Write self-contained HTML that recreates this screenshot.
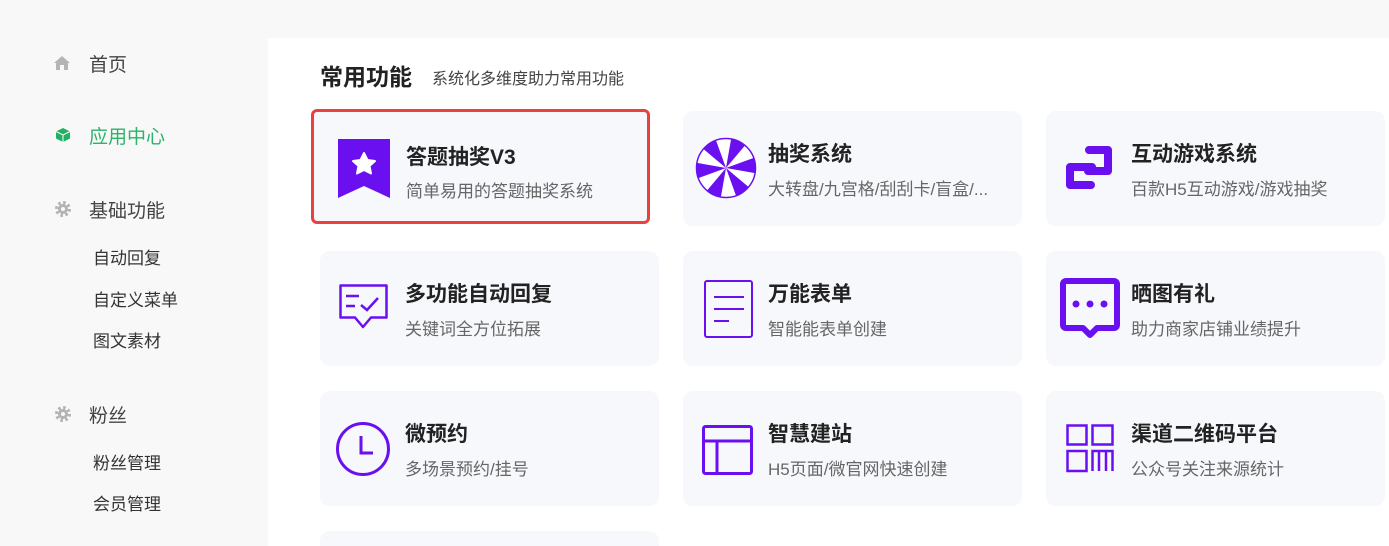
<!DOCTYPE html>
<html><head><meta charset="utf-8">
<style>
*{margin:0;padding:0;box-sizing:border-box}
html,body{width:1389px;height:546px;overflow:hidden;background:#f8f8f8}
body{font-family:"Liberation Sans","Noto Sans CJK SC",sans-serif;position:relative}
.main{position:absolute;left:268px;top:38px;width:1121px;height:508px;background:#fff}
.a{position:absolute;white-space:nowrap}
.nav{font-size:19px;color:#444}
.sub{font-size:17px;color:#333}
.card{position:absolute;width:339px;height:115px;background:#f7f8fc;border-radius:10px;overflow:hidden}
.t{position:absolute;left:85px;top:27px;font-size:21px;font-weight:bold;color:#222}
.d{position:absolute;left:85px;top:64px;font-size:17px;color:#666}
.ic{position:absolute;left:14px;top:26px}
</style></head><body>
<div class="main"></div>
<svg class="a" style="left:53px;top:55px" width="18" height="16" viewBox="0 0 18 16"><path d="M9 1 L1 8 H3 V15 H7 V10 H11 V15 H15 V8 H17 Z" fill="#b4b4b4"/></svg>
<div class="a nav" style="left:89px;top:50px">首页</div>
<svg class="a" style="left:55px;top:127px" width="16" height="16" viewBox="0 0 16 16"><path d="M8 1 L15 4.5 V11.5 L8 15 L1 11.5 V4.5 Z" fill="#22b062"/><path d="M1 4.5 L8 8 L15 4.5 M8 8 V15" stroke="#fff" stroke-width="1" fill="none"/></svg>
<div class="a nav" style="left:89px;top:122px;color:#2ab46a">应用中心</div>
<svg class="a" style="left:54px;top:200px" width="18" height="18" viewBox="0 0 18 18"><circle cx="9" cy="9" r="6" fill="none" stroke="#b4b4b4" stroke-width="4" stroke-dasharray="2.4 2.3"/><circle cx="9" cy="9" r="5" fill="#b4b4b4"/><circle cx="9" cy="9" r="2" fill="#f8f8f8"/></svg>
<div class="a nav" style="left:89px;top:196px">基础功能</div>
<div class="a sub" style="left:93px;top:244px">自动回复</div>
<div class="a sub" style="left:93px;top:286px">自定义菜单</div>
<div class="a sub" style="left:93px;top:327px">图文素材</div>
<svg class="a" style="left:54px;top:405px" width="18" height="18" viewBox="0 0 18 18"><circle cx="9" cy="9" r="6" fill="none" stroke="#b4b4b4" stroke-width="4" stroke-dasharray="2.4 2.3"/><circle cx="9" cy="9" r="5" fill="#b4b4b4"/><circle cx="9" cy="9" r="2" fill="#f8f8f8"/></svg>
<div class="a nav" style="left:89px;top:401px">粉丝</div>
<div class="a sub" style="left:93px;top:449px">粉丝管理</div>
<div class="a sub" style="left:93px;top:490px">会员管理</div>

<div class="a" style="left:320px;top:58px;font-size:23px;font-weight:bold;color:#222">常用功能</div>
<div class="a" style="left:432px;top:65px;font-size:16px;color:#444">系统化多维度助力常用功能</div>

<!-- row1 -->
<div class="card" style="left:311px;top:109px;height:115px;border:3px solid #e8413f;border-radius:6px">
<svg class="ic" style="left:24px;top:27px" width="52" height="60" viewBox="0 0 52 60"><path d="M0 0 H52 V59 L26 47 L0 59 Z" fill="#6a0ff0"/><path d="M26 14 L29.5 21 L37 22 L31.5 27 L33 34.5 L26 31 L19 34.5 L20.5 27 L15 22 L22.5 21 Z" fill="#fff" stroke="#fff" stroke-width="2" stroke-linejoin="round"/></svg>
<div class="t" style="left:92px;top:29px">答题抽奖V3</div><div class="d" style="left:92px;top:65px">简单易用的答题抽奖系统</div></div>
<div class="card" style="left:683px;top:111px">
<svg class="ic" style="left:12px;top:26px" width="62" height="62" viewBox="-31 -31 62 62"><circle r="29.5" fill="#fff" stroke="#6a0ff0" stroke-width="1.5"/>
<g fill="#6a0ff0"><path d="M0 0 L0 -29.5 A29.5 29.5 0 0 1 14.75 -25.5Z" transform="rotate(10)"/><path d="M0 0 L0 -29.5 A29.5 29.5 0 0 1 14.75 -25.5Z" transform="rotate(70)"/><path d="M0 0 L0 -29.5 A29.5 29.5 0 0 1 14.75 -25.5Z" transform="rotate(130)"/><path d="M0 0 L0 -29.5 A29.5 29.5 0 0 1 14.75 -25.5Z" transform="rotate(190)"/><path d="M0 0 L0 -29.5 A29.5 29.5 0 0 1 14.75 -25.5Z" transform="rotate(250)"/><path d="M0 0 L0 -29.5 A29.5 29.5 0 0 1 14.75 -25.5Z" transform="rotate(310)"/></g></svg>
<div class="t">抽奖系统</div><div class="d">大转盘/九宫格/刮刮卡/盲盒/...</div></div>
<div class="card" style="left:1046px;top:111px">
<svg class="ic" style="left:0;top:0" width="80" height="115" viewBox="1046 111 80 115"><path d="M1089 150 H1108 V171 H1088 V167 M1092 167 H1070 V185 H1091" fill="none" stroke="#6a0ff0" stroke-width="8" stroke-linecap="round" stroke-linejoin="round"/></svg>
<div class="t">互动游戏系统</div><div class="d">百款H5互动游戏/游戏抽奖</div></div>

<!-- row2 -->
<div class="card" style="left:320px;top:251px">
<svg class="ic" style="left:19px;top:33px" width="50" height="50" viewBox="0 0 50 50"><path d="M1.5 1.5 H47.5 V33.5 H32 L24 43 L16 33.5 H1.5 Z" fill="none" stroke="#6a0ff0" stroke-width="2.5" stroke-linejoin="round"/><path d="M7 12 H20 M7 22 H16 M22 21 L28 26 L39 14" fill="none" stroke="#6a0ff0" stroke-width="2.5"/></svg>
<div class="t">多功能自动回复</div><div class="d">关键词全方位拓展</div></div>
<div class="card" style="left:683px;top:251px">
<svg class="ic" style="left:21px;top:29px" width="50" height="58" viewBox="0 0 50 58"><rect x="1" y="1" width="47" height="56" rx="2" fill="none" stroke="#6a0ff0" stroke-width="2"/><path d="M10 17 H40 M10 29 H40 M10 41 H25" stroke="#6a0ff0" stroke-width="2"/></svg>
<div class="t">万能表单</div><div class="d">智能能表单创建</div></div>
<div class="card" style="left:1046px;top:251px">
<svg class="ic" style="left:14px;top:27px" width="60" height="62" viewBox="0 0 60 62"><path d="M6 3 H54 A3 3 0 0 1 57 6 V47 A3 3 0 0 1 54 50 H37 L30 57 L23 50 H6 A3 3 0 0 1 3 47 V6 A3 3 0 0 1 6 3 Z" fill="none" stroke="#6a0ff0" stroke-width="6" stroke-linejoin="round"/><circle cx="16" cy="26" r="3.5" fill="#6a0ff0"/><circle cx="30" cy="26" r="3.5" fill="#6a0ff0"/><circle cx="44" cy="26" r="3.5" fill="#6a0ff0"/></svg>
<div class="t">晒图有礼</div><div class="d">助力商家店铺业绩提升</div></div>

<!-- row3 -->
<div class="card" style="left:320px;top:391px">
<svg class="ic" style="left:15px;top:30px" width="56" height="56" viewBox="0 0 56 56"><circle cx="28" cy="28" r="25.5" fill="none" stroke="#6a0ff0" stroke-width="3"/><path d="M26 15 V32 H38" fill="none" stroke="#6a0ff0" stroke-width="3"/></svg>
<div class="t">微预约</div><div class="d">多场景预约/挂号</div></div>
<div class="card" style="left:683px;top:391px">
<svg class="ic" style="left:19px;top:34px" width="52" height="50" viewBox="0 0 52 50"><rect x="1.5" y="1.5" width="48" height="47" rx="2" fill="none" stroke="#6a0ff0" stroke-width="3"/><path d="M1.5 16 H49.5 M15 16 V48" stroke="#6a0ff0" stroke-width="3"/></svg>
<div class="t">智慧建站</div><div class="d">H5页面/微官网快速创建</div></div>
<div class="card" style="left:1046px;top:391px">
<svg class="ic" style="left:20px;top:33px" width="50" height="50" viewBox="0 0 50 50"><g fill="none" stroke="#6a0ff0" stroke-width="2.5"><rect x="1.5" y="1.5" width="19" height="19"/><rect x="26.5" y="1.5" width="20" height="19"/><rect x="1.5" y="27" width="19" height="20"/><path d="M26.5 47 V27 H46.5 V47 M33 27 V47 M40 27 V47"/></g></svg>
<div class="t">渠道二维码平台</div><div class="d">公众号关注来源统计</div></div>

<div class="card" style="left:320px;top:531px;height:15px;border-radius:10px 10px 0 0"></div>
</body></html>
